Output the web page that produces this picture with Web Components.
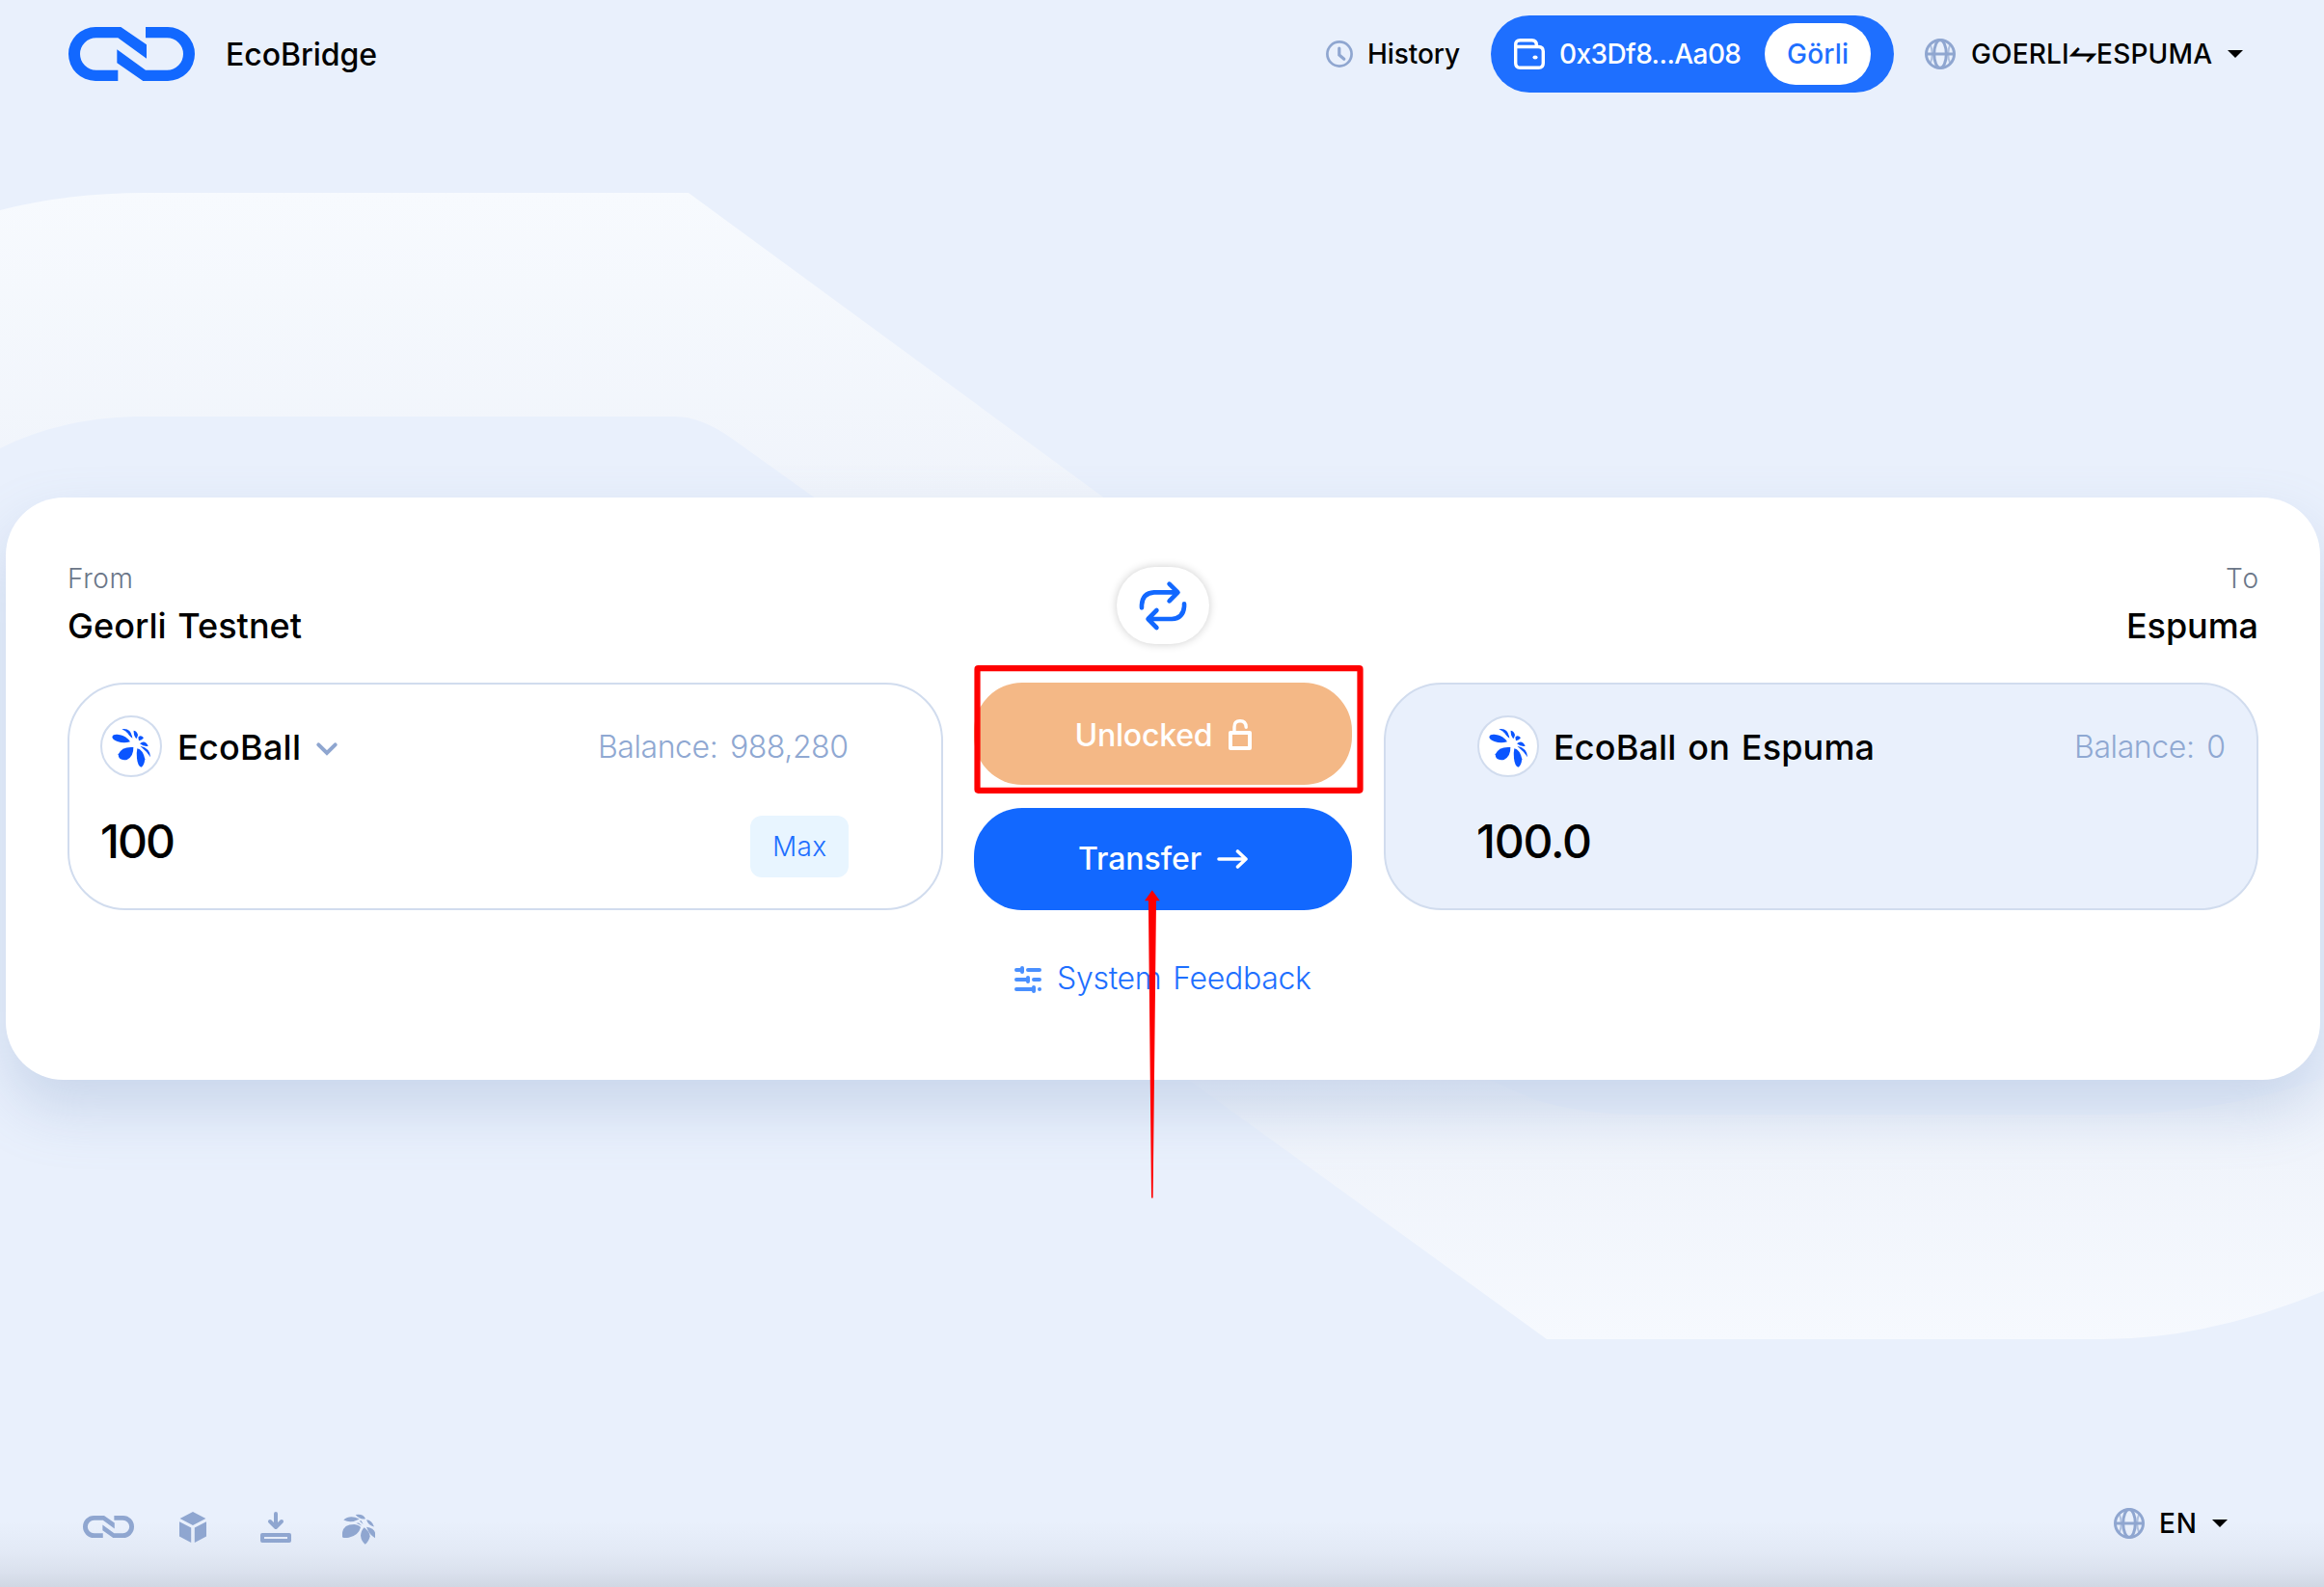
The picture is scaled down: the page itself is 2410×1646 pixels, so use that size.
<!DOCTYPE html>
<html lang="en">
<head>
<meta charset="utf-8">
<title>EcoBridge</title>
<style>
  html, body { margin: 0; height: 1646px; overflow: hidden; }
  body { background: #e9f0fc; color: #000; font-family: Inter, "DejaVu Sans", sans-serif; font-weight: 500; }
</style>
</head>
<body>
<eco-app></eco-app>
<script>
const define = (name, html, setup) => {
  const tpl = document.createElement('template');
  tpl.innerHTML = html;
  customElements.define(name, class extends HTMLElement {
    connectedCallback() {
      if (this.shadowRoot) return;
      this.attachShadow({ mode: 'open' }).append(tpl.content.cloneNode(true));
      if (setup) setup(this, this.shadowRoot);
    }
  });
};

/* Icons: [viewBox, markup]; all paint with currentColor. */
const LINK = '<g fill="currentColor"><path d="M177 84H256L336 139V182L247 118H179A50 50 0 0 0 179 218H247V252H177A84 84 0 0 1 177 84Z"/><path d="M402 252H325L244 196V154L333 218H400A50 50 0 0 0 400 118H333V84H402A84 84 0 0 1 402 252Z"/></g>';
const ICONS = {
  link: ['93 84 393 168', LINK],
  clock: ['0 0 28 28', '<g fill="none" stroke="currentColor" stroke-width="2.7" stroke-linecap="round"><circle cx="14" cy="14" r="12.6"/><path d="M13.8 8V15L18.8 19.2" stroke-width="3.2"/></g>'],
  wallet: ['0 0 32 32', '<g fill="none" stroke="currentColor" stroke-width="3.4"><path d="M1.7 8.5V25.5Q1.7 30.3 6.5 30.3H25.5Q30.3 30.3 30.3 25.5V13.3Q30.3 8.5 25.5 8.5H1.7V6.6Q1.7 1.7 6.5 1.7H18.5Q23.3 1.7 23.3 6.6V8.5"/></g><ellipse cx="22" cy="19.5" rx="2.6" ry="2" fill="currentColor"/>'],
  globe: ['0 0 32 32', '<g fill="none" stroke="currentColor" stroke-width="3"><circle cx="16" cy="16" r="14.5"/><ellipse cx="16" cy="16" rx="6.3" ry="14.5"/><path d="M1.5 16H30.5"/><path d="M5.6 6Q10 16 5.6 26M26.4 6Q22 16 26.4 26" stroke-width="2" opacity=".65"/></g>'],
  caret: ['0 0 16 8', '<path d="M0 0H16L8 8Z" fill="currentColor"/>'],
  chevron: ['0 0 22 14', '<path d="M2.3 2.3L11 11L19.7 2.3" fill="none" stroke="currentColor" stroke-width="4" stroke-linecap="round"/>'],
  swap: ['572 98 152 150', '<g fill="none" stroke="currentColor" stroke-width="14" stroke-linecap="round" stroke-linejoin="round"><path d="M581 180V172Q583 134 620 132H694M668 106L695 132L668 159"/><path d="M715 168V176Q712 213 676 215H602M628 188L601 215L628 242"/></g>'],
  lock: ['0 0 24 32', '<path d="M2 14H22V30H2Z" fill="none" stroke="currentColor" stroke-width="4" stroke-linejoin="round"/><path d="M6 14V8Q6 1.8 12 1.8Q18 1.8 18.2 8.2" fill="none" stroke="currentColor" stroke-width="3.4" stroke-linecap="round"/>'],
  arrow: ['0 0 32 20', '<path d="M2 10H30M21.5 2L30 10L21.5 18" fill="none" stroke="currentColor" stroke-width="3.6" stroke-linecap="round" stroke-linejoin="round"/>'],
  sliders: ['0 0 28 28', '<g fill="none" stroke="currentColor" stroke-width="4" stroke-linecap="round"><path d="M2 4H8M14 4H26M2 14H14M20 14H26M2 24H20M26 24H26.01"/><path d="M8 2V6M14 12V16M20 22V26"/></g>'],
  eco: ['42 36 192 192', '<g fill="currentColor"><path d="M79 103Q81 94 95 95Q121 97 135 118Q115 124 95 117Q80 112 79 103Z"/><path d="M109 79Q138 74 142 107Q133 101 128 92Q122 84 109 79Z"/><path d="M146 83Q157 85 159 97Q158 104 154 109Q145 98 146 83Z"/><path d="M160 104Q168 95 177 106Q172 113 162 115Z"/><path d="M165 124Q180 110 191 131Q178 134 165 124Z"/><path d="M166 131Q198 138 198 166Q187 148 166 131Z"/><path d="M157 139Q174 142 181 172Q178 194 169 197Q159 194 156 170Q154 152 157 139Z"/><path d="M145 135Q146 163 125 174Q98 178 98 157Q109 132 145 135Z"/></g>'],
  leaf: ['885 118 102 98', '<g fill="currentColor"><path d="M889 138Q908 120 938 135Q912 150 889 138Z"/><path d="M926 121Q950 117 957 134Q940 138 926 121Z"/><path d="M960 137Q977 138 984 159Q966 156 960 137Z"/><path d="M938 141L950 152L944 140ZM928 148L946 156L936 147Z"/><path d="M885 192V178Q889 152 922 152Q938 154 942 162Q935 188 905 194Q890 196 885 192Z"/><path d="M953 162Q970 175 971 190Q967 207 956 215Q944 206 942 188Q943 172 953 162Z"/><path d="M960 160Q983 164 987 178V195Q969 185 960 160Z"/></g>'],
  cube: ['0 0 28 32', '<path d="M14 0L27.4 7L14 14L.6 7ZM0 10.2L12.2 16.6V32L0 25.5ZM28 10.2L15.8 16.6V32L28 25.5Z" fill="currentColor"/>'],
  download: ['0 0 32 32', '<path d="M2 24H30V30H2Z" fill="none" stroke="currentColor" stroke-width="4" stroke-linejoin="round"/><path d="M16 2V15M10 10L16 16L22 10" fill="none" stroke="currentColor" stroke-width="4" stroke-linecap="round" stroke-linejoin="round"/>']
};
define('eco-icon', '<style>:host{display:block;flex:none}svg{display:block;width:100%;height:100%;overflow:visible}</style><svg preserveAspectRatio="none"></svg>', (el, root) => {
  const [box, markup] = ICONS[el.getAttribute('name')];
  const svg = root.querySelector('svg');
  svg.setAttribute('viewBox', box);
  svg.innerHTML = markup;
  el.style.width = el.getAttribute('w') + 'px';
  el.style.height = el.getAttribute('h') + 'px';
});

/* One line of text, tracked so that it fills the width given in "w". */
define('eco-text', '<style>:host{display:block;flex:none;white-space:nowrap;line-height:40px}span{display:inline-block}</style><span><slot></slot></span>', (el, root) => {
  const w = +el.getAttribute('w');
  const n = el.textContent.length;
  el.style.fontSize = el.getAttribute('size') + 'px';
  el.style.wordSpacing = (el.getAttribute('gap') || 0) + 'px';
  const natural = root.querySelector('span').getBoundingClientRect().width;
  el.style.letterSpacing = ((w - natural) / (n - 1)).toFixed(3) + 'px';
  el.style.width = w + 'px';
});

define('eco-backdrop', `<style>:host{display:block;position:absolute;inset:0;z-index:-1}svg{display:block}</style>
<svg width="2410" height="1646" viewBox="0 0 2410 1646">
  <defs>
    <linearGradient id="a" x1="0" y1="199" x2="0" y2="516" gradientUnits="userSpaceOnUse"><stop offset="0" stop-color="#f7fafe"/><stop offset="1" stop-color="#f0f4fb"/></linearGradient>
    <linearGradient id="b" x1="0" y1="1120" x2="0" y2="1389" gradientUnits="userSpaceOnUse"><stop offset="0" stop-color="#ebf1fb"/><stop offset=".3" stop-color="#f0f4fb"/><stop offset="1" stop-color="#f6f9fe"/></linearGradient>
  </defs>
  <path fill="url(#a)" d="M0 218Q70 200 150 200H714L1150 520H850L762 457Q728 432 700 432H140Q62 434 0 465Z"/>
  <path fill="url(#b)" d="M2410 1339Q2290 1389 2180 1389H1604L1230 1118H1540L1590 1140Q1640 1156 1700 1156H2180Q2300 1156 2410 1118Z"/>
</svg>`);

define('eco-logo', `<style>:host{display:flex;align-items:center;gap:32px;color:#1268ff}eco-text{color:#000}</style>
<eco-icon name="link" w="131" h="56"></eco-icon><eco-text size="32" w="157" style="margin-top:2px">EcoBridge</eco-text>`);

define('eco-wallet', `<style>
:host{display:flex;align-items:center;box-sizing:border-box;width:418px;height:80px;border-radius:40px;padding:0 24px;background:#1e6fff;color:#fff}
.net{display:flex;align-items:center;justify-content:center;margin-left:auto;width:110px;height:64px;border-radius:32px;background:#fff;color:#1e6fff}
.addr{margin-left:15px}</style>
<eco-icon name="wallet" w="32" h="32"></eco-icon><eco-text class="addr" size="28" w="189">0x3Df8...Aa08</eco-text>
<div class="net"><eco-text size="28" w="64">Görli</eco-text></div>`);

define('eco-picker', `<style>:host{display:flex;align-items:center}.c{color:#8fa6d0}</style>
<eco-icon class="c" name="globe" w="32" h="32"></eco-icon><slot></slot><eco-icon name="caret" w="16" h="8"></eco-icon>`);

define('eco-header', `<style>
:host{display:flex;align-items:center;height:112px;padding:0 84px 0 71px}
.h{display:flex;align-items:center;gap:15px;margin:0 32px 0 auto;color:#8fa6d0}.h eco-text{color:#000}
eco-picker{margin-left:32px}.p{margin:0 16px 0 16px}.harp{font:700 35px/0 "DejaVu Sans",sans-serif}</style>
<eco-logo></eco-logo>
<div class="h"><eco-icon name="clock" w="28" h="28"></eco-icon><eco-text size="28" w="96">History</eco-text></div>
<eco-wallet></eco-wallet>
<eco-picker><eco-text class="p" size="28" w="250">GOERLI<span class="harp">⥊</span>ESPUMA</eco-text></eco-picker>`);

define('eco-panel', `<style>
:host{display:block}
:host([to]) .head{align-items:flex-end}
.head{display:flex;flex-direction:column;margin-bottom:30px;height:98px}
.box{box-sizing:border-box;height:236px;border:2px solid #d1dcee;border-radius:60px;padding:32px 95.5px 0 32px}
:host([to]) .box{background:#e9f0fc;padding:32px 32px 0 95.5px}
.row{display:flex;align-items:center;height:64px}
.row+.row{margin-top:40px}
.coin{box-sizing:border-box;width:64px;height:64px;border:2px solid #d1dcee;border-radius:50%;background:#fff;color:#0a55ff;margin-right:16px}
:host([to]) .coin{margin-right:15px}
.coin eco-icon{margin:-2px}
.end{margin-left:auto}</style>
<div class="head"><slot name="side"></slot><slot name="network"></slot></div>
<div class="box">
<div class="row"><div class="coin"><eco-icon name="eco" w="64" h="64"></eco-icon></div><slot name="token"></slot><div class="end"><slot name="balance"></slot></div></div>
<div class="row"><slot name="amount"></slot><div class="end"><slot name="action"></slot></div></div>
</div>`);

define('eco-button', `<style>:host{display:flex;align-items:center;justify-content:center;height:106px;border-radius:50px;color:#fff;font-weight:500}</style><slot></slot>`);

define('eco-actions', `<style>
:host{display:flex;flex-direction:column;padding-top:8px}
.swap{display:flex;align-items:center;justify-content:center;align-self:center;width:96px;height:80px;border-radius:40px;box-shadow:0 0 10px rgba(0,0,0,.2);color:#1268ff;margin-bottom:40px}
.swap eco-icon{margin-top:-1px}
.u{background:#f4b886;margin-bottom:24px}.t{background:#1268ff}
.fb{display:flex;align-items:center;gap:16px;height:40px;margin:52px 0 0 42px;color:#4a90ff}
.fb eco-text{color:#1e6fff;font-weight:300;margin-top:-2px}</style>
<div class="swap"><eco-icon name="swap" w="50" h="50"></eco-icon></div>
<eco-button class="u"><eco-text size="32" w="143" style="margin:3px 16px 0 0">Unlocked</eco-text><eco-icon name="lock" w="24" h="32" style="margin-top:2px"></eco-icon></eco-button>
<eco-button class="t"><eco-text size="32" w="128" style="margin-right:16px">Transfer</eco-text><eco-icon name="arrow" w="32" h="20"></eco-icon></eco-button>
<div class="fb"><eco-icon name="sliders" w="28" h="28"></eco-icon><eco-text size="32" w="264" gap="3">System Feedback</eco-text></div>`);

define('eco-card', `<style>
:host{display:grid;grid-template-columns:1fr 392px 1fr;column-gap:32.5px;box-sizing:border-box;height:604px;margin:404px 4px 0 6px;padding:64px 64px 0;border-radius:60px;background:#fff;box-shadow:0 30px 60px rgba(130,157,200,.3)}
.side{color:#6b7688;font-weight:300}
.net{line-height:58px}
.bal{color:#8fa8d2;font-weight:300;margin-top:2px}
.token{display:flex;align-items:center;color:#8fa6d0}.token eco-text{color:#000;margin:2px 16px 0 0}
.amt{margin-bottom:10px}
.max{display:flex;align-items:center;justify-content:center;width:102px;height:64px;border-radius:12px;background:#e8f5ff;color:#1e6fff;font-weight:300}</style>
<eco-panel>
<eco-text slot="side" class="side" size="28" w="68">From</eco-text>
<eco-text slot="network" class="net" size="36" w="243" gap="2">Georli Testnet</eco-text>
<div slot="token" class="token"><eco-text size="36" w="128">EcoBall</eco-text><eco-icon name="chevron" w="22" h="14" style="margin-top:6px"></eco-icon></div>
<eco-text slot="balance" class="bal" size="32" w="260" gap="4">Balance: 988,280</eco-text>
<eco-text slot="amount" class="amt" size="48" w="78">100</eco-text>
<div slot="action" class="max"><eco-text size="28" w="56">Max</eco-text></div>
</eco-panel>
<eco-actions></eco-actions>
<eco-panel to>
<eco-text slot="side" class="side" size="28" w="34">To</eco-text>
<eco-text slot="network" class="net" size="36" w="137">Espuma</eco-text>
<div slot="token" class="token"><eco-text size="36" w="333" gap="2">EcoBall on Espuma</eco-text></div>
<eco-text slot="balance" class="bal" size="32" w="157" gap="4">Balance: 0</eco-text>
<eco-text slot="amount" class="amt" size="48" w="120" style="margin-left:-1px">100.0</eco-text>
</eco-panel>`);

define('eco-footer', `<style>
:host{display:flex;align-items:center;height:124px;margin-top:auto;padding:0 100px 0 86px;color:#8fa6d0;background:linear-gradient(rgba(110,115,130,0) 45%,rgba(110,115,130,.05) 70%,rgba(110,115,130,.12) 88%,rgba(110,115,130,.2))}
eco-picker{margin:0 0 8px auto;color:#000}.en{margin:0 16px 0 15px}</style>
<eco-icon name="link" w="53" h="23" style="margin-top:-1px"></eco-icon>
<eco-icon name="cube" w="28" h="32" style="margin-left:47px"></eco-icon>
<eco-icon name="download" w="32" h="32" style="margin-left:56px"></eco-icon>
<eco-icon name="leaf" w="34" h="32" style="margin:3px 0 0 53px"></eco-icon>
<eco-picker><eco-text class="en" size="28" w="39">EN</eco-text></eco-picker>`);

/* Highlight frame and pointer drawn over the page. */
define('eco-marks', `<style>:host{display:block;position:absolute;inset:0;pointer-events:none}svg{display:block}</style>
<svg width="2410" height="1646" viewBox="0 0 2410 1646"><rect x="1013.5" y="693.2" width="397" height="126.6" rx="1" fill="none" stroke="#fe0000" stroke-width="6.2"/>
<path fill="#fe0000" d="M1194.8 923.3L1202.8 934.3H1199L1195.6 1242.5H1194L1190.9 934.3H1187Z"/></svg>`);

define('eco-app', `<style>:host{display:flex;flex-direction:column;position:relative;z-index:0;width:2410px;height:1646px;overflow:hidden}</style>
<eco-backdrop></eco-backdrop><eco-header></eco-header><eco-card></eco-card><eco-footer></eco-footer><eco-marks></eco-marks>`);
</script>
</body>
</html>
